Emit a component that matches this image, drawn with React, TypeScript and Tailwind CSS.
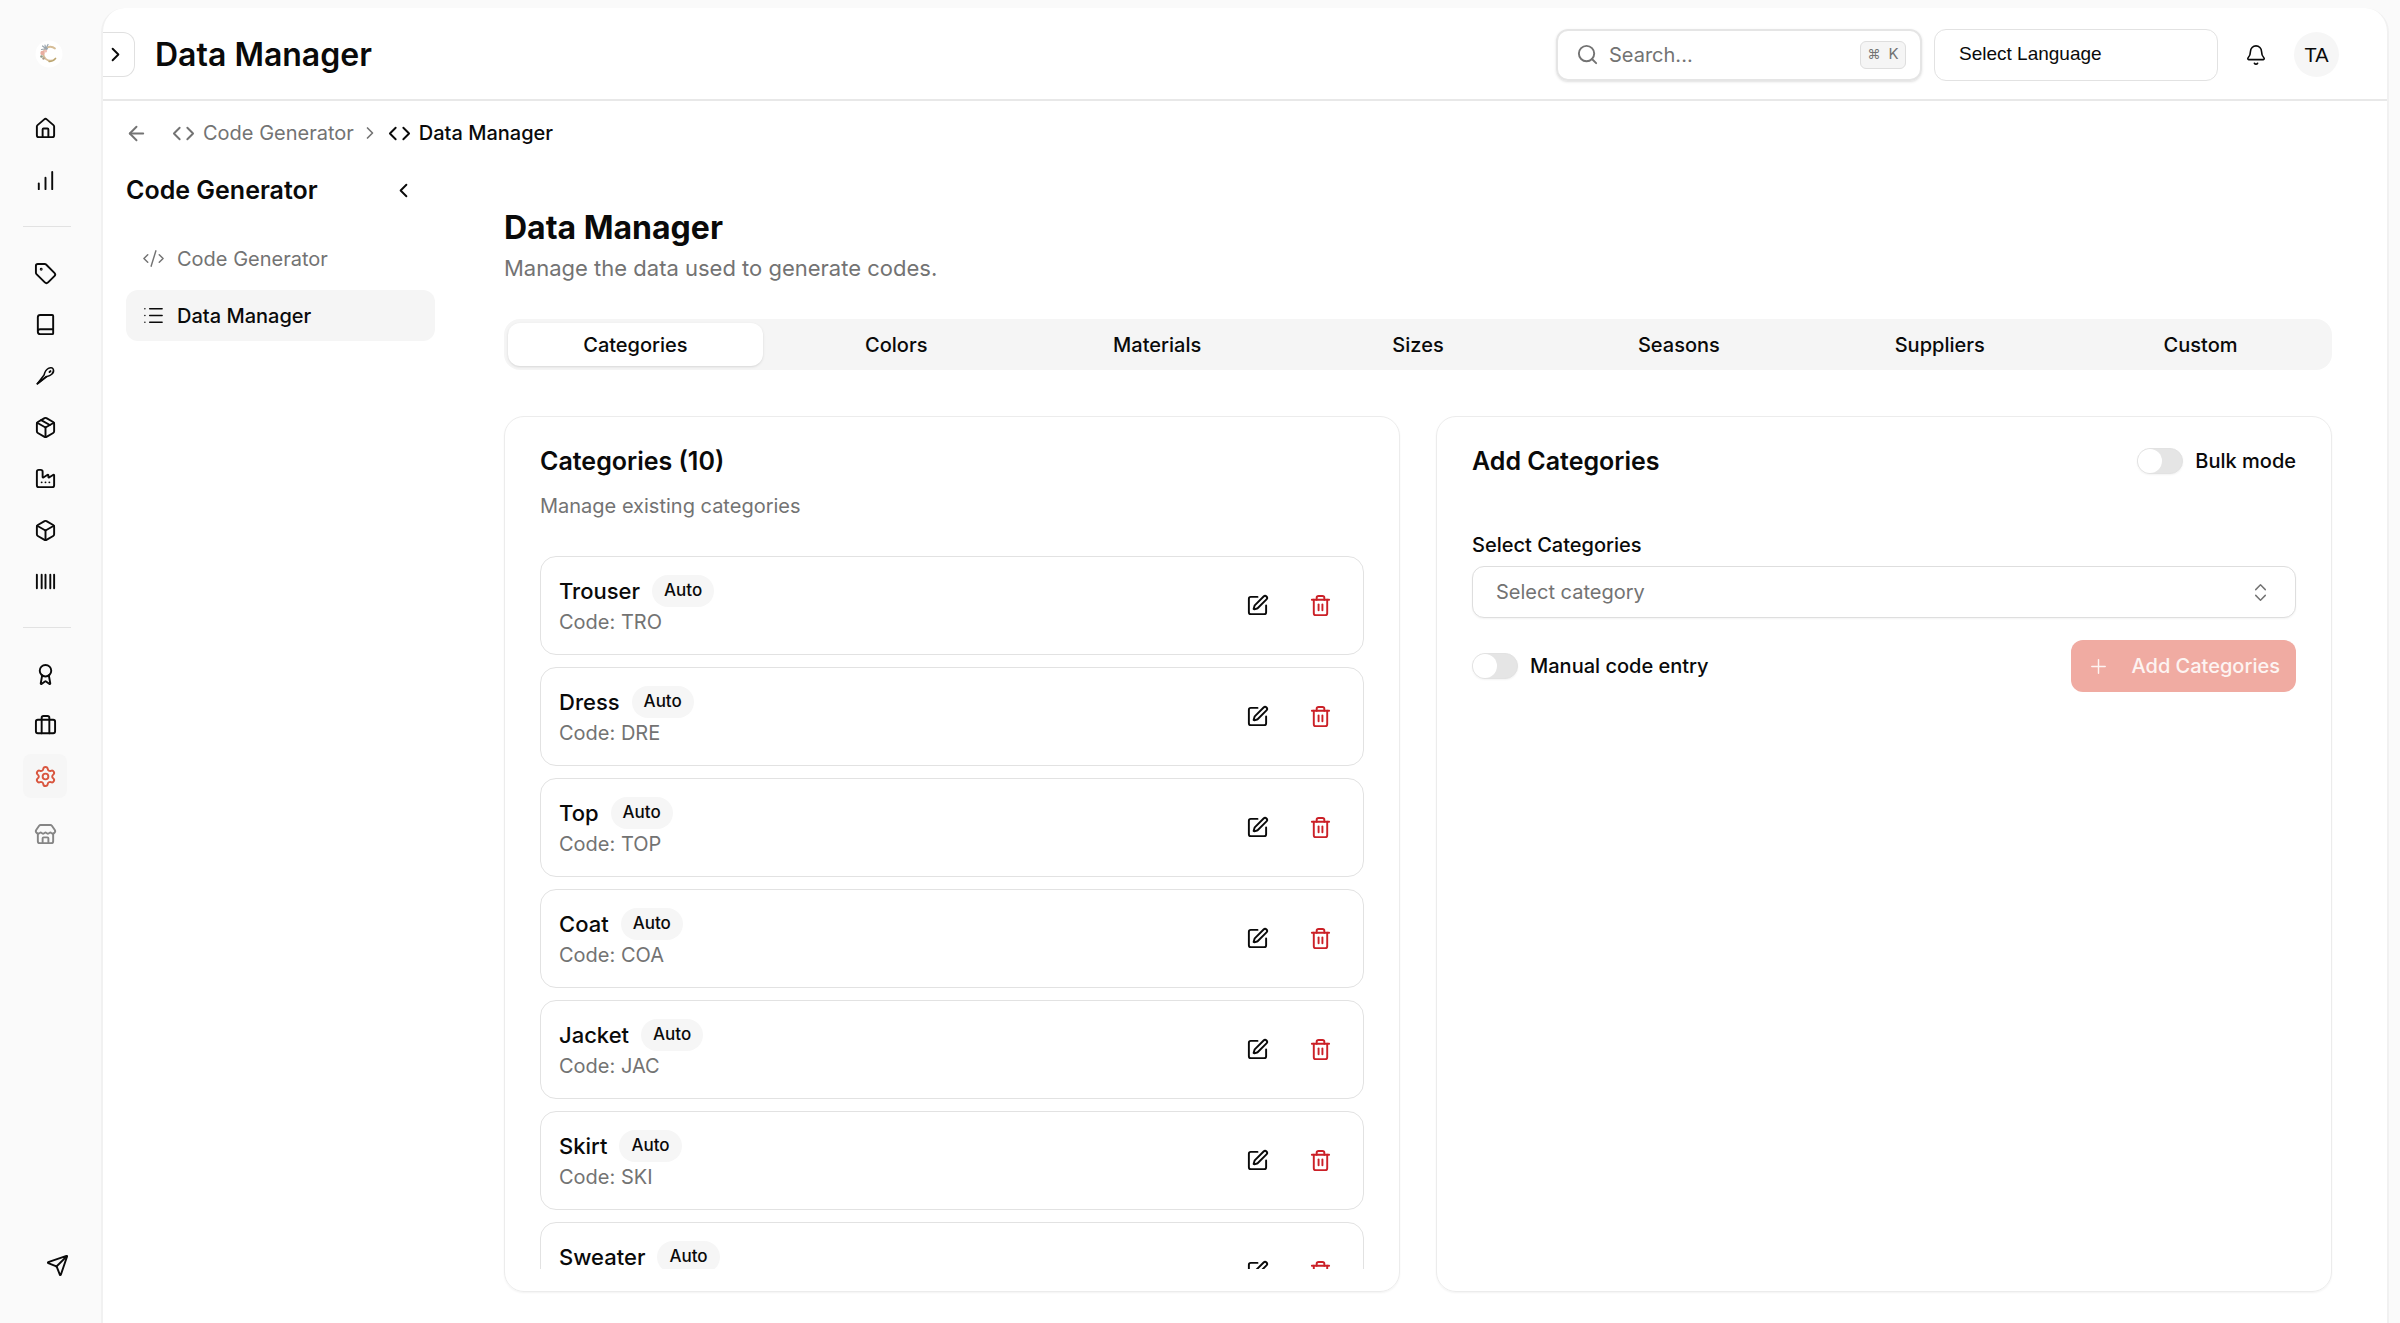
import type { ReactNode } from 'react';
import {
  ArrowLeft,
  Award,
  Barcode,
  Bell,
  Book,
  Box,
  Briefcase,
  ChartNoAxesColumnIncreasing,
  ChevronLeft,
  ChevronRight,
  ChevronsUpDown,
  Code,
  CodeXml,
  Factory,
  House,
  List,
  Package,
  Plus,
  Search,
  Send,
  Settings,
  SquarePen,
  Store,
  Tag,
  Trash2,
} from 'lucide-react';

const total = 10;

const categories = [
  { name: 'Trouser', code: 'TRO' },
  { name: 'Dress', code: 'DRE' },
  { name: 'Top', code: 'TOP' },
  { name: 'Coat', code: 'COA' },
  { name: 'Jacket', code: 'JAC' },
  { name: 'Skirt', code: 'SKI' },
  { name: 'Sweater', code: 'SWE' },
];

const tabs = ['Categories', 'Colors', 'Materials', 'Sizes', 'Seasons', 'Suppliers', 'Custom'];

function Logo() {
  return (
    <svg viewBox="0 0 28 28" className="size-7" aria-hidden="true">
      <circle cx="14" cy="14" r="13.5" fill="#fff" />
      <path d="M20 8.500A7 7 0 1 0 20.500 18.500" fill="none" stroke="#d6bd97" strokeWidth="1.8" strokeLinecap="round" />
      <path d="M14 21.500a7 7 0 0 0 6.500-3" fill="none" stroke="#b9a56f" strokeWidth="1.300" strokeLinecap="round" />
      <path d="M7.500 6l4.500 3.500M13 4.500l-2.500 5M6.500 9.500l6-1M10 5l1 5" stroke="#9aa5ae" strokeWidth="1.200" strokeLinecap="round" />
      <circle cx="7.500" cy="13" r="2.200" fill="#e8ada0" />
      <circle cx="10.500" cy="11" r="1.600" fill="#efc0b6" />
      <circle cx="6.500" cy="16.500" r="1.300" fill="#8d9a86" />
      <circle cx="8.500" cy="18.500" r="1.200" fill="#a99a88" />
    </svg>
  );
}

function Needle() {
  return (
    <svg viewBox="0 0 24 24" className="size-[23px]" fill="none" stroke="currentColor" strokeWidth="1.6" strokeLinecap="round" strokeLinejoin="round" aria-hidden="true">
      <path d="M3.5 20.5 10.500 11.500C11.200 8.500 12.500 6 15 4.600c2-1.100 4.300-.8 5 .6.800 1.600.1 4-1.500 5.500-1.500 1.400-3.500 2-5.700 2.600Z" />
      <path d="M3.500 20.500 12.800 13.300" strokeWidth="2" />
      <path d="m16.200 8.400 1-1" strokeWidth="2" />
    </svg>
  );
}

function RailLink({ label, children, className = '' }: { label: string; children: ReactNode; className?: string }) {
  return (
    <a href="#" aria-label={label} className={`grid size-11 place-items-center rounded-lg ${className}`}>
      {children}
    </a>
  );
}

function Rail() {
  return (
    <nav aria-label="Main" className="flex w-[101px] shrink-0 flex-col pt-10 pl-[23px]">
      <div className="ml-3">
        <Logo />
      </div>
      <div className="mt-[38px] flex flex-col gap-2">
        <RailLink label="Home"><House className="size-[23px]" /></RailLink>
        <RailLink label="Analytics"><ChartNoAxesColumnIncreasing className="size-[23px]" /></RailLink>
      </div>
      <hr className="mt-6 w-12 border-[#e2e2e2]" />
      <div className="mt-6 grid h-[360px]">
        <RailLink label="Tags"><Tag className="size-[23px]" /></RailLink>
        <RailLink label="Catalog"><Book className="size-[23px]" /></RailLink>
        <RailLink label="Trims"><Needle /></RailLink>
        <RailLink label="Packages"><Package className="size-[23px]" /></RailLink>
        <RailLink label="Production"><Factory className="size-[23px]" /></RailLink>
        <RailLink label="Inventory"><Box className="size-[23px]" /></RailLink>
        <RailLink label="Barcodes"><Barcode className="size-[23px]" /></RailLink>
      </div>
      <hr className="mt-4 w-12 border-[#e2e2e2]" />
      <div className="mt-6 flex flex-col gap-[7px]">
        <RailLink label="Certificates"><Award className="size-[23px]" /></RailLink>
        <RailLink label="Business"><Briefcase className="size-[23px]" /></RailLink>
        <RailLink label="Settings" className="bg-[#f6f6f6] text-[#d9563f]"><Settings className="size-[23px]" /></RailLink>
      </div>
      <RailLink label="Store" className="mt-[14px] text-[#858585]"><Store className="size-[23px]" /></RailLink>
      <RailLink label="Feedback" className="mt-auto mb-9 ml-3"><Send className="size-[23px]" /></RailLink>
    </nav>
  );
}

function Header() {
  return (
    <header className="flex h-[93px] shrink-0 items-center border-b-2 border-[#e8e8e8] pt-0.5 pr-12">
      <button aria-label="Expand sidebar" className="grid h-[45px] w-8 place-items-center rounded-r-xl border border-l-0 border-[#e0e0e0] pr-1.5">
        <ChevronRight className="size-[23px]" />
      </button>
      <h1 className="ml-5 text-[32px] leading-10 font-semibold">Data Manager</h1>
      <div className="ml-auto flex h-[52px] w-[366px] items-center rounded-xl border-2 border-[#e5e5e5] px-[18px] text-[#737373] shadow-sm">
        <Search className="size-[23px] shrink-0" />
        <input aria-label="Search" placeholder="Search..." className="ml-2.5 min-w-0 flex-1 bg-transparent text-[20px] outline-none placeholder:text-[#737373]" />
        <kbd className="-mr-1 flex h-7 w-[46px] items-center justify-center gap-2 rounded-md border border-[#dedede] bg-[#f5f5f5] font-[Inter,sans-serif] text-[15px]">
          <span className="text-[13px]">⌘</span>
          <span>K</span>
        </kbd>
      </div>
      <select aria-label="Select Language" className="ml-3 h-[52px] w-[284px] appearance-none rounded-xl border border-[#e2e2e2] bg-white px-6 font-['Liberation_Sans',sans-serif] text-[19px]">
        <option>Select Language</option>
      </select>
      <button aria-label="Notifications" className="ml-6 grid size-7 place-items-center">
        <Bell className="size-[22px]" strokeWidth={1.75} />
      </button>
      <button aria-label="Account" className="ml-6 grid size-[45px] place-items-center rounded-full bg-[#f6f6f6] font-['Liberation_Sans',sans-serif] text-[20px]">
        TA
      </button>
    </header>
  );
}

function Breadcrumb() {
  return (
    <nav aria-label="Breadcrumb" className="flex h-16 shrink-0 items-center pl-[22px] text-[20px] text-[#737373]">
      <a href="#" aria-label="Back"><ArrowLeft className="size-[23px]" /></a>
      <a href="#" className="ml-6 flex items-center gap-2">
        <Code className="size-[23px]" />
        Code Generator
      </a>
      <ChevronRight className="ml-1.5 size-5" />
      <span aria-current="page" className="ml-2 flex items-center gap-2 font-medium text-[#0a0a0a]">
        <Code className="size-[23px]" />
        Data Manager
      </span>
    </nav>
  );
}

function SubNav() {
  return (
    <aside className="w-[309px] shrink-0">
      <div className="flex h-[51px] items-center justify-between pr-5">
        <h2 className="text-[25px] font-semibold">Code Generator</h2>
        <button aria-label="Collapse menu" className="grid place-items-center"><ChevronLeft className="size-[23px]" /></button>
      </div>
      <nav aria-label="Code Generator" className="mt-[17px] flex flex-col gap-1.5 text-[20px]">
        <a href="#" className="flex h-[51px] items-center gap-3 rounded-xl px-4 text-[#737373]">
          <CodeXml className="size-[23px]" strokeWidth={1.5} />
          Code Generator
        </a>
        <a href="#" className="flex h-[51px] items-center gap-3 rounded-xl bg-[#f5f5f5] px-4 font-medium">
          <List className="size-[23px]" strokeWidth={1.5} />
          Data Manager
        </a>
      </nav>
    </aside>
  );
}

function Switch({ id, label }: { id: string; label: string }) {
  return (
    <div className="flex items-center gap-3">
      <input
        id={id}
        type="checkbox"
        role="switch"
        className="h-[26px] w-[46px] appearance-none rounded-full border border-[#e2e2e2] bg-[#e5e5e5] shadow-xs before:block before:size-6 before:rounded-full before:bg-white checked:before:ml-5"
      />
      <label htmlFor={id} className="text-[20px] leading-7 font-medium">{label}</label>
    </div>
  );
}

function CategoryRow({ name, code }: { name: string; code: string }) {
  return (
    <li className="flex h-[99px] shrink-0 items-center rounded-2xl border border-[#e2e2e2] pr-[31px] pl-[18px]">
      <div>
        <div className="flex items-center gap-3">
          <span className="text-[22px] leading-8 font-medium">{name}</span>
          <span className="flex h-8 items-center rounded-full bg-[#f6f6f6] px-3 text-[17px] font-medium">Auto</span>
        </div>
        <p className="text-[20px] leading-[30px] text-[#737373]">Code: {code}</p>
      </div>
      <div className="ml-auto flex gap-10">
        <button aria-label={`Edit ${name}`}><SquarePen className="size-[23px]" /></button>
        <button aria-label={`Delete ${name}`} className="text-[#cb2027]"><Trash2 className="size-[23px]" /></button>
      </div>
    </li>
  );
}

export default function App() {
  return (
    <div className="flex h-screen overflow-hidden bg-[#fafafa] font-[Inter,sans-serif] text-[#0a0a0a]">
      <Rail />
      <div className="mt-2 mr-[11px] flex min-w-0 flex-1 flex-col rounded-t-3xl border-x-2 border-[#f1f1f1] bg-white">
        <Header />
        <Breadcrumb />
        <div className="flex min-h-0 flex-1 pr-[55px] pb-[31px] pl-[23px]">
          <SubNav />
          <main className="ml-[69px] flex min-w-0 flex-1 flex-col pt-[43px]">
            <h2 className="text-[32px] leading-10 font-bold">Data Manager</h2>
            <p className="mt-1 text-[22px] leading-8 text-[#737373]">Manage the data used to generate codes.</p>
            <div role="tablist" aria-label="Data type" className="mt-[35px] grid h-[51px] shrink-0 grid-cols-7 gap-1.5 rounded-2xl bg-[#f5f5f5] p-1">
              {tabs.map((tab, i) => (
                <button
                  key={tab}
                  role="tab"
                  aria-selected={i === 0}
                  className={`rounded-xl text-[20px] font-medium ${i === 0 ? 'bg-white shadow-sm' : ''}`}
                >
                  {tab}
                </button>
              ))}
            </div>
            <div className="mt-[46px] grid min-h-0 flex-1 grid-cols-2 gap-9">
              <section className="flex min-h-0 flex-col rounded-[20px] border border-[#ececec] px-[35px] pt-6 pb-[22px] shadow-xs">
                <h3 className="text-[25px] leading-10 font-semibold">Categories ({total})</h3>
                <p className="mt-[11px] text-[20px] leading-7 text-[#737373]">Manage existing categories</p>
                <ul className="mt-9 flex min-h-0 flex-1 flex-col gap-3 overflow-hidden">
                  {categories.map((c) => (
                    <CategoryRow key={c.code} name={c.name} code={c.code} />
                  ))}
                </ul>
              </section>
              <section className="flex flex-col rounded-[20px] border border-[#ececec] px-[35px] pt-6 shadow-xs">
                <div className="flex items-center justify-between">
                  <h3 className="text-[25px] leading-10 font-semibold">Add Categories</h3>
                  <Switch id="bulk-mode" label="Bulk mode" />
                </div>
                <label htmlFor="category" className="mt-12 text-[20px] leading-8 font-medium">Select Categories</label>
                <div className="relative mt-[5px] text-[#737373]">
                  <select id="category" className="block h-[52px] w-full appearance-none rounded-xl border border-[#dedede] bg-white px-[23px] text-[20px] shadow-xs">
                    <option>Select category</option>
                  </select>
                  <ChevronsUpDown className="pointer-events-none absolute inset-y-0 right-6 my-auto size-[23px]" strokeWidth={1.5} />
                </div>
                <div className="mt-[22px] flex items-center justify-between">
                  <Switch id="manual-code" label="Manual code entry" />
                  <button disabled className="flex h-[52px] items-center gap-[22px] rounded-xl bg-[#f0aba2] px-4 text-[20px] font-medium text-[#fdf4f2]">
                    <Plus className="size-[23px]" strokeWidth={1.5} />
                    Add Categories
                  </button>
                </div>
              </section>
            </div>
          </main>
        </div>
      </div>
    </div>
  );
}
